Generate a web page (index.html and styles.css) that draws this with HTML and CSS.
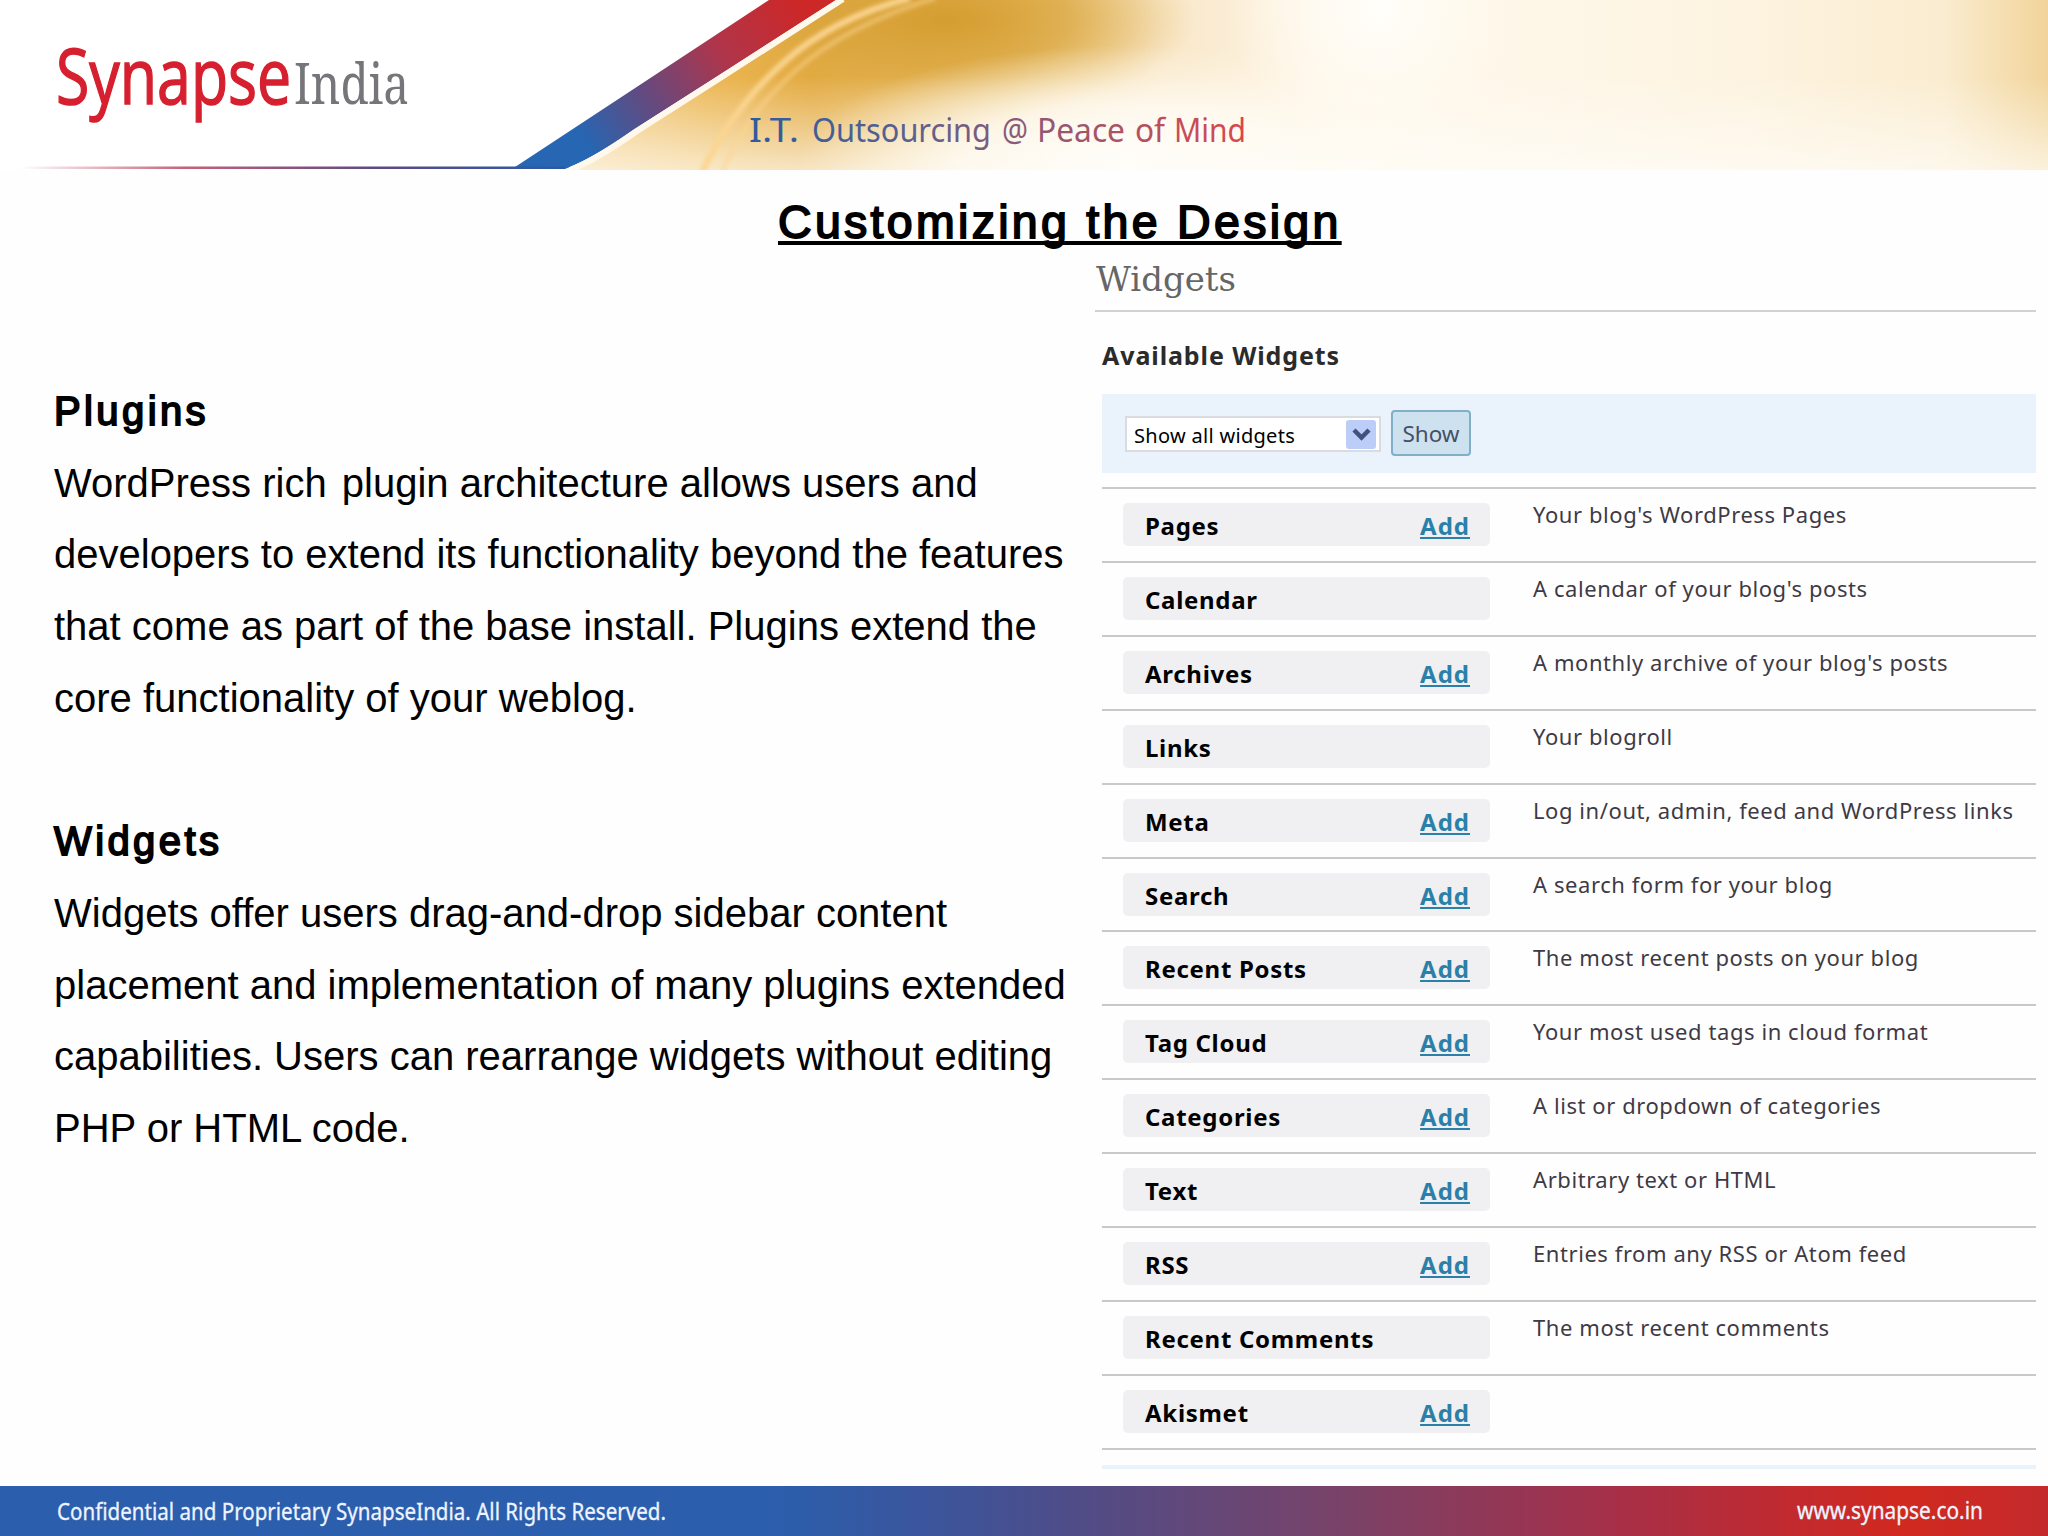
FILE: index.html
```html
<!DOCTYPE html>
<html lang="en">
<head>
    <meta charset="UTF-8">
    <meta name="viewport" content="width=device-width, initial-scale=1.0">
    <title>Customizing the Design</title>
    <link rel="stylesheet" href="styles.css">
</head>
<body>
    <header class="banner">
        <svg width="2048" height="170" viewBox="0 0 2048 170">
            <defs>
                <linearGradient id="stripe" gradientUnits="userSpaceOnUse" x1="800" y1="10" x2="590" y2="150">
                    <stop offset="0" stop-color="#cc2828"/>
                    <stop offset="0.35" stop-color="#b0354a"/>
                    <stop offset="0.7" stop-color="#634a80"/>
                    <stop offset="1" stop-color="#2666b2"/>
                </linearGradient>
                <linearGradient id="rule" x1="0" x2="1">
                    <stop offset="0" stop-color="#fff"/>
                    <stop offset="0.3" stop-color="#c4637a"/>
                    <stop offset="0.65" stop-color="#5f4a82"/>
                    <stop offset="1" stop-color="#2b5aa4"/>
                </linearGradient>
                <linearGradient id="gold" gradientUnits="userSpaceOnUse" x1="560" y1="0" x2="2048" y2="0">
                    <stop offset="0" stop-color="#f5d08c"/>
                    <stop offset="0.1" stop-color="#ebb652"/>
                    <stop offset="0.17" stop-color="#e3a93f"/>
                    <stop offset="0.3" stop-color="#e8c06c"/>
                    <stop offset="0.4" stop-color="#f8e6c6"/>
                    <stop offset="0.53" stop-color="#fff9ee"/>
                    <stop offset="0.8" stop-color="#fdf3e0"/>
                    <stop offset="0.93" stop-color="#faecd0"/>
                    <stop offset="1" stop-color="#f1d49a"/>
                </linearGradient>
                <radialGradient id="dark">
                    <stop offset="0" stop-color="#d59d30"/>
                    <stop offset="0.5" stop-color="#d9a43c" stop-opacity="0.7"/>
                    <stop offset="1" stop-color="#e0b050" stop-opacity="0"/>
                </radialGradient>
                <radialGradient id="glow">
                    <stop offset="0" stop-color="#fffefa"/>
                    <stop offset="0.5" stop-color="#fffaf0" stop-opacity="0.85"/>
                    <stop offset="1" stop-color="#fff8ea" stop-opacity="0"/>
                </radialGradient>
                <linearGradient id="fade" x1="0" y1="0" x2="0" y2="1">
                    <stop offset="0.45" stop-color="#fffdf8" stop-opacity="0"/>
                    <stop offset="1" stop-color="#fffdf8" stop-opacity="0.7"/>
                </linearGradient>
                <linearGradient id="tag" gradientUnits="userSpaceOnUse" x1="749" y1="0" x2="1245" y2="0">
                    <stop offset="0" stop-color="#2f5b9c"/>
                    <stop offset="0.3" stop-color="#56608f"/>
                    <stop offset="0.55" stop-color="#8a5a78"/>
                    <stop offset="1" stop-color="#d9484a"/>
                </linearGradient>
                <filter id="soft"><feGaussianBlur stdDeviation="2"/></filter>
                <clipPath id="area">
                    <path d="M842 0H2048V170H572L636 132Z"/>
                </clipPath>
            </defs>
            <g clip-path="url(#area)">
                <rect x="560" width="1488" height="170" fill="url(#gold)"/>
                <ellipse cx="945" cy="20" rx="250" ry="95" fill="url(#dark)"/>
                <ellipse cx="1125" cy="165" rx="330" ry="120" fill="url(#glow)"/>
                <ellipse cx="1380" cy="10" rx="150" ry="150" fill="url(#glow)"/>
                <rect x="560" width="1488" height="170" fill="url(#fade)"/>
                <g fill="none" stroke="#fbd591" filter="url(#soft)">
                    <path d="M910 -2Q833 18 783 63T702 172" stroke-width="6"/>
                    <path d="M935 -2Q845 26 795 71T722 172" stroke-width="4" opacity="0.6"/>
                </g>
            </g>
            <path d="M769 0H836L713 79L633 130Q590 160 565 169H512Z" fill="url(#stripe)"/>
            <path d="M843 -1L717 80L637 131Q596 160 570 170" fill="none" stroke="#fff8ec" stroke-width="6"/>
            <rect x="20" y="166.500" width="545" height="2.500" fill="url(#rule)"/>
            <text class="logo-main" transform="translate(56 104) scale(0.79 1)">Synapse</text>
            <text class="logo-sub" x="294" y="104" textLength="115" lengthAdjust="spacingAndGlyphs">India</text>
            <g class="tagline" fill="url(#tag)">
                <text x="749" y="142" textLength="50" lengthAdjust="spacingAndGlyphs">I.T.</text>
                <text x="812" y="142" textLength="179" lengthAdjust="spacingAndGlyphs">Outsourcing</text>
                <text x="1002" y="142" textLength="26" lengthAdjust="spacingAndGlyphs">@</text>
                <text x="1037" y="142" textLength="88" lengthAdjust="spacingAndGlyphs">Peace</text>
                <text x="1135" y="142" textLength="30" lengthAdjust="spacingAndGlyphs">of</text>
                <text x="1174" y="142" textLength="72" lengthAdjust="spacingAndGlyphs">Mind</text>
            </g>
        </svg>
    </header>

    <h1 class="title">Customizing the Design</h1>

    <main class="content">
        <section class="copy">
            <h2>Plugins</h2>
            <p>WordPress rich<span class="gap"> </span>plugin architecture allows users and<br>
            developers to extend its functionality beyond the features<br>
            that come as part of the base install. Plugins extend the<br>
            core functionality of your weblog.</p>
            <h2>Widgets</h2>
            <p>Widgets offer users drag-and-drop sidebar content<br>
            placement and implementation of many plugins extended<br>
            capabilities. Users can rearrange widgets without editing<br>
            PHP or HTML code.</p>
        </section>

        <section class="panel">
            <h2 class="panel-title">Widgets</h2>
            <h3 class="panel-subtitle">Available Widgets</h3>
            <div class="filter">
                <div class="select">
                    <span>Show all widgets</span>
                    <svg class="arrow" width="30" height="29" viewBox="0 0 30 29"><rect width="30" height="29" rx="3" fill="#bccdf8"/><path d="M8 10l7.500 7.500L23 10" fill="none" stroke="#42527e" stroke-width="4.500"/></svg>
                </div>
                <div class="show-btn">Show</div>
            </div>
            <ul class="widgets">
                <li><div class="widget"><b>Pages</b><a>Add</a></div><span class="desc">Your blog's WordPress Pages</span></li>
                <li><div class="widget"><b>Calendar</b></div><span class="desc">A calendar of your blog's posts</span></li>
                <li><div class="widget"><b>Archives</b><a>Add</a></div><span class="desc">A monthly archive of your blog's posts</span></li>
                <li><div class="widget"><b>Links</b></div><span class="desc">Your blogroll</span></li>
                <li><div class="widget"><b>Meta</b><a>Add</a></div><span class="desc">Log in/out, admin, feed and WordPress links</span></li>
                <li><div class="widget"><b>Search</b><a>Add</a></div><span class="desc">A search form for your blog</span></li>
                <li><div class="widget"><b>Recent Posts</b><a>Add</a></div><span class="desc">The most recent posts on your blog</span></li>
                <li><div class="widget"><b>Tag Cloud</b><a>Add</a></div><span class="desc">Your most used tags in cloud format</span></li>
                <li><div class="widget"><b>Categories</b><a>Add</a></div><span class="desc">A list or dropdown of categories</span></li>
                <li><div class="widget"><b>Text</b><a>Add</a></div><span class="desc">Arbitrary text or HTML</span></li>
                <li><div class="widget"><b>RSS</b><a>Add</a></div><span class="desc">Entries from any RSS or Atom feed</span></li>
                <li><div class="widget"><b>Recent Comments</b></div><span class="desc">The most recent comments</span></li>
                <li><div class="widget"><b>Akismet</b><a>Add</a></div></li>
            </ul>
            <div class="panel-end"></div>
        </section>
    </main>

    <footer class="footer">
        <svg width="2048" height="50" viewBox="0 0 2048 50">
            <text x="57" y="34" textLength="609" lengthAdjust="spacingAndGlyphs">Confidential and Proprietary SynapseIndia. All Rights Reserved.</text>
            <text x="1797" y="33" textLength="186" lengthAdjust="spacingAndGlyphs">www.synapse.co.in</text>
        </svg>
    </footer>
</body>
</html>
```
FILE: styles.css
```css
* {
    box-sizing: border-box;
}
body {
    margin: 0;
    width: 2048px;
    height: 1536px;
    display: flex;
    flex-direction: column;
    overflow: hidden;
    background: #fefefe;
    font-family: "Liberation Sans", Arial, sans-serif;
    color: #000;
}
h1, h2, h3, p, ul {
    margin: 0;
    padding: 0;
}
svg {
    display: block;
}

/* top banner */
.banner {
    height: 170px;
    background: #fff;
}
.logo-main {
    font-family: "Open Sans", sans-serif;
    font-size: 77px;
    fill: #d6202f;
    stroke: #d6202f;
    stroke-width: 1.5;
}
.logo-sub {
    font-family: "Noto Serif", "DejaVu Serif", serif;
    font-size: 56px;
    fill: #76767a;
}
.tagline {
    font-family: "Noto Sans", sans-serif;
    font-size: 33px;
}

.title {
    height: 82px;
    padding: 24px 0 0 778px;
    font-size: 46.500px;
    font-weight: normal;
    line-height: 56px;
    letter-spacing: 3.300px;
    text-decoration: underline;
    text-decoration-skip-ink: none;
    white-space: nowrap;
    -webkit-text-stroke: 1.800px #000;
}

/* two columns */
.content {
    display: flex;
    height: 1234px;
}
.copy {
    width: 1095px;
    padding: 124px 0 0 54px;
    font-size: 40px;
    line-height: 71.700px;
    white-space: nowrap;
}
.copy h2 {
    font-size: 40px;
    font-weight: normal;
    line-height: 71.700px;
    letter-spacing: 3.400px;
    -webkit-text-stroke: 1.800px #000;
}
.copy p + h2 {
    margin-top: 71.700px;
}
.gap {
    letter-spacing: 4px;
}
.panel {
    width: 941px;
    font-family: "Noto Sans", sans-serif;
}
.panel-title {
    height: 60px;
    padding: 5px 0 0 1px;
    border-bottom: 2px solid #d3d0d5;
    font-family: "DejaVu Serif", serif;
    font-weight: normal;
    font-size: 34px;
    line-height: 44px;
    color: #666;
}
.panel-subtitle {
    height: 82px;
    padding: 26px 0 0 7px;
    font-size: 25px;
    line-height: 34px;
    letter-spacing: 0.900px;
    color: #2b2b2b;
}
.filter {
    display: flex;
    gap: 10px;
    height: 79px;
    margin-left: 7px;
    padding: 16px 23px;
    background: #eaf2fc;
}
.select {
    display: flex;
    justify-content: space-between;
    width: 256px;
    height: 36px;
    margin-top: 6px;
    padding: 2px 3px 0 7px;
    border: 2px solid #d8dbe2;
    background: #fff;
    font-size: 20px;
    line-height: 31px;
    letter-spacing: 0.300px;
}
.show-btn {
    width: 80px;
    height: 46px;
    border: 2px solid #80afc8;
    border-radius: 4px;
    background: #cee1ef;
    font-size: 22.500px;
    line-height: 44px;
    text-align: center;
    color: #464f66;
}
.widgets {
    margin: 14px 0 0 7px;
    list-style: none;
    border-top: 2px solid #cac7cd;
}
.widgets li {
    display: flex;
    height: 73.920px;
    padding: 14px 0 0 21px;
    border-bottom: 2px solid #cac7cd;
}
.widget {
    display: flex;
    justify-content: space-between;
    width: 367px;
    height: 43px;
    padding: 0 20px 0 22px;
    border-radius: 5px;
    background: #f0eff1;
    font-size: 24px;
    line-height: 46px;
    letter-spacing: 0.700px;
}
.widget a {
    color: #2b80a9;
    font-weight: bold;
    letter-spacing: 1px;
    text-decoration: underline;
}
.desc {
    margin: -2px 0 0 43px;
    font-size: 22px;
    line-height: 26px;
    letter-spacing: 0.570px;
    color: #3e3a45;
    white-space: nowrap;
}
.panel-end {
    height: 4px;
    margin: 15px 0 0 7px;
    background: #eaf2fa;
}

.footer {
    height: 50px;
    background: linear-gradient(90deg, #2b5eac 0, #2b5eac 38%, #3f5398 47%, #514c86 53%, #7b4267 66%, #a3304a 78%, #c02a30 87%, #d1291f 93%, #c42a2c 100%);
}
.footer text {
    font-family: "Noto Sans", sans-serif;
    font-size: 23px;
    fill: #eef4ff;
    stroke: #eef4ff;
    stroke-width: 0.3;
}
```
